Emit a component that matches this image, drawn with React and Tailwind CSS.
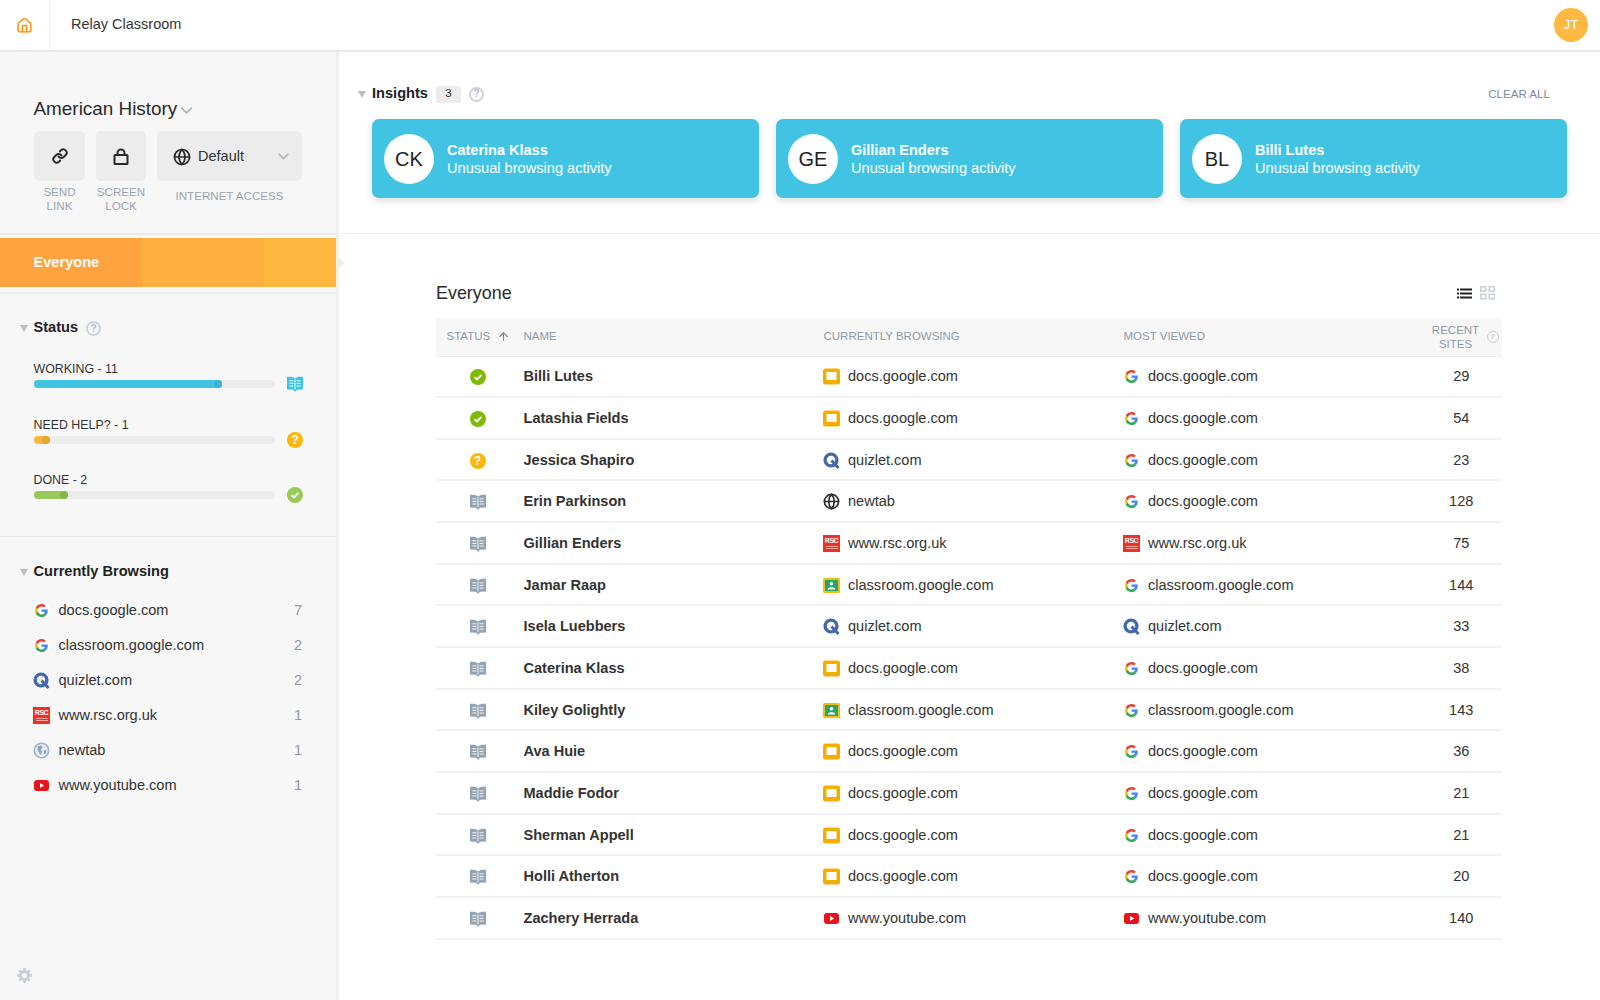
import React from "react";
import { Home, Link as LinkIcon, ChevronDown, Globe, ArrowUp } from "lucide-react";

const GoogleG = ({ size = 13 }) => (
  <svg width={size} height={size} viewBox="0 0 48 48">
    <path fill="#EA4335" d="M24 9.5c3.54 0 6.71 1.22 9.21 3.6l6.85-6.85C35.9 2.38 30.47 0 24 0 14.62 0 6.51 5.38 2.56 13.22l7.98 6.19C12.43 13.72 17.74 9.5 24 9.5z" />
    <path fill="#4285F4" d="M46.98 24.55c0-1.57-.15-3.09-.38-4.55H24v9.02h12.94c-.58 2.96-2.26 5.48-4.78 7.18l7.73 6c4.51-4.18 7.09-10.36 7.09-17.65z" />
    <path fill="#FBBC05" d="M10.53 28.59c-.48-1.45-.76-2.99-.76-4.59s.27-3.14.76-4.59l-7.98-6.19C.92 16.46 0 20.12 0 24c0 3.88.92 7.54 2.56 10.78l7.97-6.19z" />
    <path fill="#34A853" d="M24 48c6.48 0 11.93-2.13 15.89-5.81l-7.73-6c-2.15 1.45-4.92 2.3-8.16 2.3-6.26 0-11.57-4.22-13.47-9.91l-7.98 6.19C6.51 42.62 14.62 48 24 48z" />
  </svg>
);

const GoogleRound = () => (
  <div className="w-[17px] h-[17px] rounded-full bg-white flex items-center justify-center">
    <GoogleG />
  </div>
);

const Slides = () => (
  <svg width="17" height="17" viewBox="0 0 17 17">
    <rect x="0" y="0.5" width="17" height="16" rx="2.5" fill="#f5ad00" />
    <rect x="3.5" y="4" width="10" height="8" rx="0.5" fill="#fff" />
  </svg>
);

const Quizlet = () => (
  <svg width="17" height="17" viewBox="0 0 17 17">
    <circle cx="8" cy="8" r="5.9" fill="none" stroke="#4468ae" strokeWidth="3.4" />
    <path d="M8.5 8.5 L15.5 16" stroke="#4468ae" strokeWidth="3" />
  </svg>
);

const Rsc = () => (
  <div className="w-[17px] h-[17px] bg-[#ee3124] flex flex-col items-center pt-[2px]">
    <span className="text-[7px] leading-[7px] font-bold text-white font-['Liberation_Sans',sans-serif] tracking-[-0.5px]">RSC</span>
    <div className="mt-[2px] w-[12px] h-[1px] bg-[#f9a79f]" />
    <div className="mt-[1px] w-[12px] h-[1px] bg-[#f9a79f]" />
  </div>
);

const Classroom = () => (
  <svg width="17" height="17" viewBox="0 0 17 17">
    <rect x="0" y="1" width="17" height="15" rx="1.5" fill="#f5ba15" />
    <rect x="2" y="3" width="13" height="11" fill="#25a667" />
    <circle cx="8.5" cy="6.8" r="1.8" fill="#fff" />
    <path d="M4.8 12 C5 9.8 12 9.8 12.2 12 V12.6 H4.8Z" fill="#fff" />
  </svg>
);

const Youtube = () => (
  <svg width="17" height="17" viewBox="0 0 17 17">
    <rect x="1" y="3" width="15" height="11" rx="3" fill="#e8131c" />
    <path d="M7 6 L11.2 8.5 L7 11Z" fill="#fff" />
  </svg>
);

const GlobeDark = () => <Globe size={17} strokeWidth={2.4} color="#2f2f2f" />;

const GlobeSoft = () => (
  <svg width="17" height="17" viewBox="0 0 17 17">
    <circle cx="8.5" cy="8.5" r="7.2" fill="#e6ecf2" stroke="#a3b3c6" strokeWidth="1.6" />
    <path d="M5 4 L9 3.5 L9.5 6 L7.5 7.5 L9 9.5 L8 13 L6 11 L4.5 7.5Z M11 8.5 L13.5 8 L13 11.5 L11 12.5Z" fill="#8fa5be" />
  </svg>
);

const ICONS = {
  g: <GoogleG />,
  s: <Slides />,
  q: <Quizlet />,
  r: <Rsc />,
  c: <Classroom />,
  y: <Youtube />,
  n: <GlobeDark />,
};

const Book = ({ color = "#94a3b2" }) => (
  <svg width="16" height="16" viewBox="0 0 16 16">
    <path fill={color} d="M0 .8 L2.6 .8 C4.8 .8 6.8 1.2 8 2.6 C9.2 1.2 11.2 .8 13.4 .8 L16 .8 V13.6 L10.2 13.8 L8 15.8 L5.8 13.8 L0 13.6Z" />
    <path stroke="#fff" strokeWidth="0.9" fill="none" d="M8 3.4 V13.4 M2.4 4.8 H6.4 M2.4 7.4 H6.4 M2.4 10 H6.4 M9.6 4.8 H13.6 M9.6 7.4 H13.6 M9.6 10 H13.6" />
  </svg>
);

const CheckDot = ({ color }) => (
  <svg width="16" height="16" viewBox="0 0 16 16">
    <circle cx="8" cy="8" r="8" fill={color} />
    <path d="M4.6 8.2 L7 10.4 L11.4 5.9" stroke="#fff" strokeWidth="1.9" fill="none" />
  </svg>
);

const HelpDot = () => (
  <div className="w-[16px] h-[16px] rounded-full bg-[#ffb60a] flex items-center justify-center text-white text-[12px] leading-none font-bold">?</div>
);

const HelpOutline = ({ size = "md" }) =>
  size === "md" ? (
    <div className="w-[15px] h-[15px] rounded-full border-2 border-[#cdd2d8] flex items-center justify-center text-[#b6bcc4] text-[10px] leading-none font-bold">?</div>
  ) : (
    <div className="w-[12px] h-[12px] rounded-full border border-[#c9ced4] flex items-center justify-center text-[#b6bcc4] text-[8px] leading-none">?</div>
  );

const Triangle = () => (
  <svg width="8" height="7" viewBox="0 0 8 7">
    <path d="M0 0 H8 L4 7Z" fill="#bdbdbd" />
  </svg>
);

const Gear = () => (
  <svg width="15" height="15" viewBox="0 0 16 16">
    <path fill="#c6d0da" d="M6.8 0 H9.2 L9.6 2.2 L11.2 2.9 L13.1 1.6 L14.4 2.9 L13.1 4.8 L13.8 6.4 L16 6.8 V9.2 L13.8 9.6 L13.1 11.2 L14.4 13.1 L13.1 14.4 L11.2 13.1 L9.6 13.8 L9.2 16 H6.8 L6.4 13.8 L4.8 13.1 L2.9 14.4 L1.6 13.1 L2.9 11.2 L2.2 9.6 L0 9.2 V6.8 L2.2 6.4 L2.9 4.8 L1.6 2.9 L2.9 1.6 L4.8 2.9 L6.4 2.2Z" />
    <circle cx="8" cy="8" r="2.8" fill="#f7f7f7" />
  </svg>
);

const STATUS = [
  { label: "WORKING - 11", fill: "w-[188px]", bar: "bg-[#41c4e4]", dot: "bg-[#3ab2dc]", icon: <Book color="#41c4e4" /> },
  { label: "NEED HELP? - 1", fill: "w-[16px]", bar: "bg-[#ffb340]", dot: "bg-[#dfa92d]", icon: <HelpDot /> },
  { label: "DONE - 2", fill: "w-[34px]", bar: "bg-[#99c959]", dot: "bg-[#85b84a]", icon: <CheckDot color="#99c959" /> },
];

const BROWSING = [
  [<GoogleRound />, "docs.google.com", 7],
  [<GoogleRound />, "classroom.google.com", 2],
  [<Quizlet />, "quizlet.com", 2],
  [<Rsc />, "www.rsc.org.uk", 1],
  [<GlobeSoft />, "newtab", 1],
  [<Youtube />, "www.youtube.com", 1],
];

const INSIGHTS = [
  ["CK", "Caterina Klass"],
  ["GE", "Gillian Enders"],
  ["BL", "Billi Lutes"],
];

const ROWS = [
  ["d", "Billi Lutes", "s", "docs.google.com", "g", "docs.google.com", 29],
  ["d", "Latashia Fields", "s", "docs.google.com", "g", "docs.google.com", 54],
  ["h", "Jessica Shapiro", "q", "quizlet.com", "g", "docs.google.com", 23],
  ["b", "Erin Parkinson", "n", "newtab", "g", "docs.google.com", 128],
  ["b", "Gillian Enders", "r", "www.rsc.org.uk", "r", "www.rsc.org.uk", 75],
  ["b", "Jamar Raap", "c", "classroom.google.com", "g", "classroom.google.com", 144],
  ["b", "Isela Luebbers", "q", "quizlet.com", "q", "quizlet.com", 33],
  ["b", "Caterina Klass", "s", "docs.google.com", "g", "docs.google.com", 38],
  ["b", "Kiley Golightly", "c", "classroom.google.com", "g", "classroom.google.com", 143],
  ["b", "Ava Huie", "s", "docs.google.com", "g", "docs.google.com", 36],
  ["b", "Maddie Fodor", "s", "docs.google.com", "g", "docs.google.com", 21],
  ["b", "Sherman Appell", "s", "docs.google.com", "g", "docs.google.com", 21],
  ["b", "Holli Atherton", "s", "docs.google.com", "g", "docs.google.com", 20],
  ["b", "Zachery Herrada", "y", "www.youtube.com", "y", "www.youtube.com", 140],
];

const COLS = "grid grid-cols-[87.5px_300px_300px_300px_78.5px] items-center";

const Site = ({ icon, text }) => (
  <div className="flex items-center gap-[8px] text-[14.55px] text-[#333]">
    <div className="-mt-[1px] -ml-[0.5px] w-[17px] h-[17px] flex items-center justify-center">{ICONS[icon]}</div>
    <span>{text}</span>
  </div>
);

export default function App() {
  return (
    <div className="h-screen w-full flex flex-col bg-white overflow-hidden font-['Liberation_Sans',Arial,sans-serif] text-[#333]">
      <header className="h-[52px] shrink-0 flex items-stretch bg-white border-b-2 border-[#e9e9e9]">
        <div className="w-[50px] border-r border-[#eeeeee] flex items-center justify-center">
          <Home size={17} color="#ff8a00" strokeWidth={2} />
        </div>
        <div className="ml-[21px] flex items-center text-[14.5px] text-[#333]">Relay Classroom</div>
        <div className="ml-auto mr-[12px] flex items-center">
          <div className="w-[34px] h-[34px] rounded-full bg-[#ffb840] text-white text-[13.5px] flex items-center justify-center">JT</div>
        </div>
      </header>

      <div className="flex-1 flex min-h-0">
        <aside className="w-[339px] shrink-0 bg-[#f7f7f7] border-r-[3px] border-[#eeeeee] flex flex-col relative">
          <div className="h-[183px] shrink-0 border-b-2 border-[#eaeaea] pt-[45px] pl-[33px]">
            <div className="flex items-center pl-[0.5px] text-[18.9px] leading-[24px] text-[#2a2a2a]">
              American History
              <ChevronDown size={19} color="#b5b5b5" strokeWidth={2.5} className="mt-[2px]" />
            </div>
            <div className="mt-[10px] ml-[1px] flex gap-[11px] items-start">
              <div className="w-[51px] flex flex-col items-center">
                <div className="w-[51px] h-[50px] rounded-[5px] bg-[#ececec] flex items-center justify-center">
                  <LinkIcon size={16} color="#2b2b2b" strokeWidth={3} />
                </div>
                <div className="mt-[4px] text-[11.6px] leading-[14px] text-[#9aa5b1] text-center">SEND<br />LINK</div>
              </div>
              <div className="w-[50px] flex flex-col items-center">
                <div className="w-[50px] h-[50px] rounded-[5px] bg-[#ececec] flex items-center justify-center">
                  <svg width="16" height="17" viewBox="0 0 16 17" fill="none" stroke="#2b2b2b" strokeWidth="2">
                    <rect x="1.5" y="7" width="13" height="9" rx="0.5" />
                    <path d="M4.5 7 V5 a3.5 3.5 0 0 1 7 0 V7" />
                  </svg>
                </div>
                <div className="mt-[4px] w-[60px] text-[11.6px] leading-[14px] text-[#9aa5b1] text-center">SCREEN<br />LOCK</div>
              </div>
              <div className="flex flex-col items-center">
                <div className="w-[145px] h-[50px] rounded-[5px] bg-[#ececec] flex items-center pl-[16px]">
                  <Globe size={18} color="#2b2b2b" strokeWidth={2.3} className="mt-[2px]" />
                  <span className="ml-[7px] mt-[1px] text-[14.5px] text-[#333]">Default</span>
                  <ChevronDown size={17} color="#b5b5b5" strokeWidth={2.5} className="ml-auto mr-[10px]" />
                </div>
                <div className="mt-[8px] text-[11.6px] leading-[14px] text-[#9aa5b1]">INTERNET ACCESS</div>
              </div>
            </div>
          </div>

          <div className="mt-[3px] h-[49px] shrink-0 flex items-center pl-[33.5px] text-[14.6px] font-bold text-white bg-[linear-gradient(90deg,#ffa340_0,#ffa340_142px,#ffae40_142px,#ffae40_264px,#ffb83f_264px)]">
            Everyone
          </div>
          <svg className="absolute left-[336px] top-[203px]" width="9" height="16" viewBox="0 0 9 16">
            <path d="M0 0 L9 8 L0 16Z" fill="#eeeeee" />
          </svg>

          <div className="mt-[5px] h-[245px] shrink-0 border-t-2 border-b border-t-[#eaeaea] border-b-[#e4e4e4] pt-[24px]">
            <div className="flex items-center h-[20px] pl-[20px]">
              <Triangle />
              <span className="ml-[5.5px] text-[14.6px] font-bold text-[#222]">Status</span>
              <div className="ml-[8px] mt-[1px]"><HelpOutline /></div>
            </div>
            <div className="mt-[23px] pl-[33.5px] flex flex-col">
              {STATUS.map((s) => (
                <div key={s.label} className="h-[55.5px]">
                  <div className="text-[12.4px] leading-[16px] text-[#333]">{s.label}</div>
                  <div className="-mt-[1px] flex items-center">
                    <div className="w-[241.5px] h-[8px] rounded-full bg-[#ececec]">
                      <div className={`${s.fill} h-[8px] rounded-full ${s.bar} flex justify-end`}>
                        <div className={`w-[8px] h-[8px] rounded-full ${s.dot}`} />
                      </div>
                    </div>
                    <div className="ml-[12px] w-[16px] h-[16px] flex items-center justify-center">{s.icon}</div>
                  </div>
                </div>
              ))}
            </div>
          </div>

          <div className="pt-[25px]">
            <div className="flex items-center h-[20px] pl-[20px]">
              <Triangle />
              <span className="ml-[5.5px] text-[14.6px] font-bold text-[#222]">Currently Browsing</span>
            </div>
            <div className="mt-[11px] pl-[33px] pr-[34px] flex flex-col">
              {BROWSING.map(([icon, name, n]) => (
                <div key={name} className="h-[35px] flex items-center text-[14.55px]">
                  <div className="w-[17px] h-[17px] flex items-center justify-center">{icon}</div>
                  <span className="ml-[8.5px] text-[#333]">{name}</span>
                  <span className="ml-auto text-[#8f99a5]">{n}</span>
                </div>
              ))}
            </div>
          </div>

          <div className="mt-auto pl-[17px] pb-[17px]">
            <Gear />
          </div>
        </aside>

        <main className="flex-1 min-w-0">
          <section className="h-[182px] border-b border-[#eeeeee] pt-[32px]">
            <div className="h-[20px] flex items-center pl-[19px] pr-[50px]">
              <Triangle />
              <span className="ml-[6px] text-[14.6px] font-bold text-[#222]">Insights</span>
              <span className="ml-[8px] w-[25px] h-[17px] rounded-[3px] bg-[#ececec] text-[11.5px] flex items-center justify-center text-[#333]">3</span>
              <div className="ml-[8px]"><HelpOutline /></div>
              <span className="ml-auto text-[11.6px] text-[#7e8a97]">CLEAR ALL</span>
            </div>
            <div className="mt-[15px] px-[33px] grid grid-cols-3 gap-[17px]">
              {INSIGHTS.map(([init, name]) => (
                <div key={init} className="h-[79px] rounded-[7px] bg-[#41c4e4] shadow-[0_3px_8px_rgba(0,0,0,0.14)] flex items-center pl-[12px]">
                  <div className="w-[50px] h-[50px] rounded-full bg-white flex items-center justify-center text-[20px] text-[#222]">{init}</div>
                  <div className="ml-[13px] pt-[1px] text-white text-[14.5px] leading-[18px]">
                    <div className="font-bold">{name}</div>
                    <div className="text-[14.6px]">Unusual browsing activity</div>
                  </div>
                </div>
              ))}
            </div>
          </section>

          <section className="pl-[97px] pt-[47px] w-[1163px]">
            <div className="h-[24px] flex items-center">
              <span className="text-[17.9px] text-[#2a2a2a]">Everyone</span>
              <div className="ml-auto mr-[7px] flex items-center gap-[8px]">
                <svg width="15" height="11" viewBox="0 0 15 11" fill="#222">
                  <rect x="0" y="0.5" width="2" height="2" />
                  <rect x="3" y="0.5" width="12" height="2" />
                  <rect x="0" y="4.5" width="2" height="2" />
                  <rect x="3" y="4.5" width="12" height="2" />
                  <rect x="0" y="8.5" width="2" height="2" />
                  <rect x="3" y="8.5" width="12" height="2" />
                </svg>
                <svg width="15" height="14" viewBox="0 0 15 14" fill="none" stroke="#c8d0d8" strokeWidth="1.5">
                  <rect x="0.75" y="0.75" width="5" height="4.5" />
                  <rect x="9.25" y="0.75" width="5" height="4.5" />
                  <rect x="0.75" y="8.25" width="5" height="4.5" />
                  <rect x="9.25" y="8.25" width="5" height="4.5" />
                </svg>
              </div>
            </div>

            <div className="mt-[13px] w-[1066px]">
              <div className={`${COLS} h-[38.5px] bg-[#f7f7f7] border-b border-[#eeeeee] text-[11.5px] text-[#8f9aa6]`}>
                <div className="pl-[10.5px] flex items-center">
                  <span>STATUS</span>
                  <ArrowUp size={13} color="#7e8a97" strokeWidth={2} className="ml-[7px]" />
                </div>
                <div>NAME</div>
                <div>CURRENTLY BROWSING</div>
                <div>MOST VIEWED</div>
                <div className="flex items-center">
                  <div className="w-[64px] text-center leading-[14px]">RECENT<br />SITES</div>
                  <div className="-ml-[1px]"><HelpOutline size="sm" /></div>
                </div>
              </div>
              {ROWS.map((r) => (
                <div key={r[1]} className={`${COLS} h-[41.67px] pt-[2px] border-b-2 border-[#f1f1f1]`}>
                  <div className="flex justify-center w-[83px]">
                    {r[0] === "d" ? <CheckDot color="#7fba00" /> : r[0] === "h" ? <HelpDot /> : <Book />}
                  </div>
                  <div className="text-[14.55px] font-bold text-[#333]">{r[1]}</div>
                  <Site icon={r[2]} text={r[3]} />
                  <Site icon={r[4]} text={r[5]} />
                  <div className="text-[14.55px] text-[#333] w-[75.5px] text-center">{r[6]}</div>
                </div>
              ))}
            </div>
          </section>
        </main>
      </div>
    </div>
  );
}
